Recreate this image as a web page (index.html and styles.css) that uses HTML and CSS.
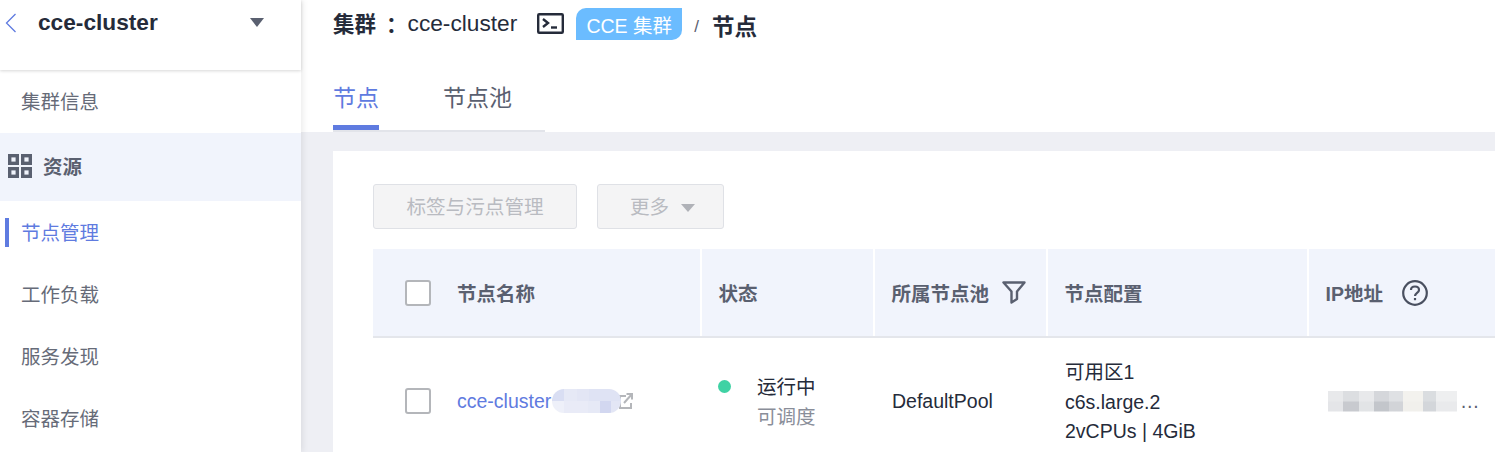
FILE: index.html
```html
<!DOCTYPE html>
<html lang="zh-CN">
<head>
    <meta charset="UTF-8">
    <title>节点 - cce-cluster</title>
    <link rel="stylesheet" href="styles.css">
</head>
<body>
    <aside class="sidebar">
        <div class="side-head">
            <svg class="back-icon" width="12" height="20" viewBox="0 0 12 20"><path d="M10.500 1 L1.500 10 L10.500 19" fill="none" stroke="#5f7be0" stroke-width="1.300"/></svg>
            <span class="side-title">cce-cluster</span>
            <span class="side-caret"></span>
        </div>
        <div class="menu-item">集群信息</div>
        <div class="menu-group">
            <svg width="24" height="24" viewBox="0 0 24 24" fill="none" stroke="#5a6070" stroke-width="3.400"><rect x="1.700" y="1.700" width="7.600" height="7.600"/><rect x="14.700" y="1.700" width="7.600" height="7.600"/><rect x="1.700" y="14.700" width="7.600" height="7.600"/><rect x="14.700" y="14.700" width="7.600" height="7.600"/></svg>
            <span>资源</span>
        </div>
        <div class="menu-item active">节点管理</div>
        <div class="menu-item">工作负载</div>
        <div class="menu-item">服务发现</div>
        <div class="menu-item">容器存储</div>
    </aside>

    <main class="content">
        <header class="top">
            <div class="crumbs">
                <b class="crumb-label">集群<span class="crumb-colon">：</span></b>
                <span class="crumb-name">cce-cluster</span>
                <svg class="term-icon" width="27" height="21" viewBox="0 0 27 21" fill="none" stroke="#252b3a" stroke-width="2.400"><rect x="1.200" y="1.200" width="24.600" height="18.600" rx="1"/><path d="M6 6 L11 10 L6 14"/><path d="M14 14.500 H20"/></svg>
                <span class="badge">CCE 集群</span>
                <span class="crumb-sep">/</span>
                <b class="crumb-current">节点</b>
            </div>
            <nav class="tabs">
                <span class="tab active">节点</span>
                <span class="tab">节点池</span>
            </nav>
        </header>

        <section class="card">
            <div class="toolbar">
                <button class="btn btn-tags" type="button">标签与污点管理</button>
                <button class="btn btn-more" type="button">更多<span class="btn-caret"></span></button>
            </div>

            <div class="grid grid-head">
                <div class="cell first"><span class="check"></span>节点名称</div>
                <div class="cell">状态</div>
                <div class="cell">所属节点池
                    <svg class="filter-icon" width="24" height="23" viewBox="0 0 24 23" fill="none" stroke="#5a6070" stroke-width="2.400" stroke-linejoin="round"><path d="M1.500 1.500 H22.500 L15 10.500 V18 L9.500 21.500 V10.500 Z"/></svg>
                </div>
                <div class="cell">节点配置</div>
                <div class="cell">IP地址
                    <svg class="help-icon" width="26" height="26" viewBox="0 0 26 26" fill="none" stroke="#4a5060" stroke-width="2.200"><circle cx="13" cy="13" r="11.800"/><path d="M9 10 C9 7.500 11 6.500 13 6.500 C15.500 6.500 17 8 17 10 C17 13 13 12.800 13 16"/><path d="M13 18 V20.200"/></svg>
                </div>
            </div>

            <div class="grid grid-row">
                <div class="cell first">
                    <span class="check"></span>
                    <a class="node-link">cce-cluster</a>
                    <span class="mask-name"></span>
                    <svg class="ext-icon" width="15" height="18" viewBox="0 0 15 18" fill="none" stroke="#b4b6ba" stroke-width="2"><path d="M8 4 H2 V16 H13 V11"/><path d="M6 11 L14 2"/><path d="M8.500 2 H14 V7.500"/></svg>
                </div>
                <div class="cell status">
                    <span class="dot"></span>
                    <div class="status-text">
                        <div>运行中</div>
                        <div class="muted">可调度</div>
                    </div>
                </div>
                <div class="cell">DefaultPool</div>
                <div class="cell config">
                    <div>可用区1</div>
                    <div>c6s.large.2</div>
                    <div>2vCPUs | 4GiB</div>
                </div>
                <div class="cell ip"><span class="mask-ip"></span><span class="more-dots">…</span></div>
            </div>
        </section>
    </main>
</body>
</html>
```

FILE: styles.css
```css
:root {
    --blue: #5f7be0; --text: #252b3a; --text-mid: #5a6070; --page-bg: #eeeff4; --head-bg: #f1f4fc;
}
* { margin: 0; padding: 0; box-sizing: border-box; }
html, body { height: 100%; overflow: hidden; }
body { display: flex; background: #fff; color: var(--text); font-family: "Liberation Sans", "Noto Sans CJK SC", sans-serif; font-size: 19.5px; }

.sidebar { width: 301px; flex-shrink: 0; background: #fff; box-shadow: 2px 0 6px rgba(0,0,0,0.08); z-index: 2; }
.side-head { height: 70px; padding: 0 37px 25px 5px; display: flex; align-items: center; box-shadow: 0 1px 3px rgba(0,0,0,0.16); }
.side-title { margin-left: 21px; font-size: 22.7px; font-weight: 700; flex-grow: 1; }
.side-caret { border: 7px solid transparent; border-top: 9px solid var(--text-mid); border-bottom: 0; }
.menu-item { height: 62px; padding: 0 0 2px 21px; display: flex; align-items: center; color: #666b78; position: relative; }
.side-head + .menu-item { height: 63px; }
.menu-item.active { color: var(--blue); }
.menu-item.active::before { content: ''; position: absolute; left: 5px; top: 17px; width: 4px; height: 29px; background: var(--blue); }
.menu-group { height: 68px; padding: 0 0 3px 8px; display: flex; align-items: center; gap: 11px; background: var(--head-bg); color: var(--text-mid); font-weight: 700; }

.content { flex-grow: 1; min-width: 0; background: var(--page-bg); }
.top { height: 132px; padding-left: 32px; background: #fff; }
.crumbs { height: 46px; display: flex; align-items: center; }
.crumb-label { font-size: 21.5px; margin-bottom: 2px; }
.crumb-colon { margin-left: 10px; font-family: "Noto Sans CJK TC", sans-serif; }
.crumb-name { margin-left: 0; font-size: 22.7px; }
.term-icon { margin-left: 20px; }
.badge { margin-left: 12px; width: 106px; height: 32px; margin-top: 2px; display: flex; align-items: center; justify-content: center; background: #6bbcff; color: #fff; border-radius: 10px 0 10px 0; }
.crumb-sep { margin-left: 12px; margin-top: 8px; font-size: 17px; color: var(--text-mid); }
.crumb-current { margin-left: 13px; margin-top: 4px; font-size: 22.5px; }

.tabs { width: 212px; height: 86px; padding-top: 32px; display: flex; gap: 64px; border-bottom: 2px solid #e2e4ea; }
.tab { height: 52px; font-size: 23px; line-height: 40px; color: var(--text-mid); }
.tab.active { color: var(--blue); border-bottom: 5px solid var(--blue); }

.card { margin: 19px 0 0 32px; padding: 33px 0 0 40px; height: 301px; background: #fff; }
.toolbar { display: flex; gap: 20px; margin-bottom: 20px; }
.btn { height: 45px; padding-bottom: 2px; background: #f4f4f5; border: 1px solid #dfe1e6; border-radius: 3px; color: #b9bbc1; font-family: inherit; font-size: 19.6px; }
.btn-tags { width: 204px; }
.btn-more { width: 127px; padding-left: 4px; display: flex; align-items: center; justify-content: center; gap: 12px; }
.btn-caret { border: 7px solid transparent; border-top: 8px solid #b0b2b8; border-bottom: 0; margin-top: 4px; }

.grid { display: grid; grid-template-columns: 327px 173px 173px 261px 1fr; }
.cell { display: flex; align-items: center; padding-left: 19px; }
.cell.first { padding-left: 32px; }
.grid-head { height: 89px; background: var(--head-bg); border-bottom: 2px solid #e4e6eb; color: var(--text-mid); font-weight: 700; }
.grid-head .cell + .cell { border-left: 2px solid #fff; padding-left: 16.500px; }
.grid-row { height: 114px; padding-top: 12px; }
.check { width: 26px; height: 26px; margin-right: 26px; background: #fff; border: 2px solid #b4b6ba; border-radius: 3px; flex-shrink: 0; }
.filter-icon { margin-left: 13px; }
.help-icon { margin-left: 19px; }

.node-link { color: var(--blue); }
.mask-name { width: 69px; height: 24px; margin-left: 1px; border-radius: 12px; position: relative; z-index: 1; background:
    linear-gradient(90deg, #d9def3 0 18%, #e6e9f6 18% 36%, #e3e6f5 36% 54%, #dfe3f4 54% 100%) top / 100% 50% no-repeat,
    linear-gradient(90deg, #eef0f9 0 18%, #e9ebf7 18% 52%, #e6e9f6 52% 70%, #d2d7f0 70% 86%, #e3e6f5 86% 100%) bottom / 100% 50% no-repeat; }
.ext-icon { margin-left: -3px; margin-top: -1px; }

.status { padding-left: 18px; }
.dot { width: 13px; height: 13px; margin: 0 26px 30px 0; border-radius: 50%; background: #3fd2a4; }
.status-text { line-height: 30px; padding-top: 1px; }
.muted { color: #8a8e99; }
.config { display: block; padding: 8px 0 0 19px; line-height: 29.500px; }
.ip { padding-left: 21px; }
.mask-ip { width: 129px; height: 21px; background:
    linear-gradient(90deg, #e8e9eb 0 12%, #dcdee1 12% 24%, #e8e9eb 24% 36%, #d5d7db 36% 47%, #dfe1e4 47% 58%, #f3f2ee 58% 74%, #dadde0 74% 84%, #eeeff0 84% 100%) top / 100% 50% no-repeat,
    linear-gradient(90deg, #e4e5e8 0 12%, #c8cacf 12% 24%, #e2e4e6 24% 36%, #c3c6cb 36% 47%, #d2d4d8 47% 58%, #f1f0ec 58% 74%, #d3d6da 74% 84%, #e9eaec 84% 100%) bottom / 100% 50% no-repeat; }
.more-dots { margin-left: 3px; color: var(--text-mid); }
```
